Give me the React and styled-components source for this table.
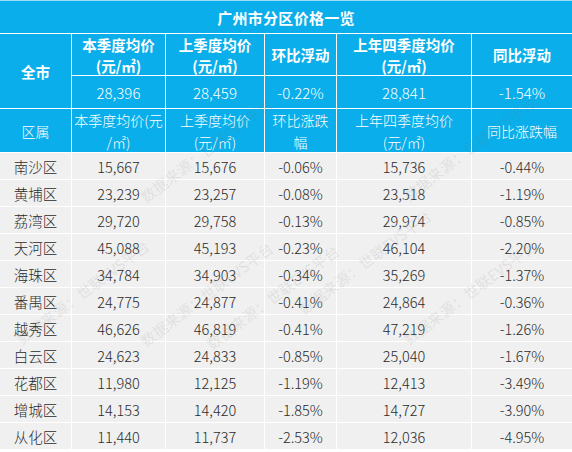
import React from "react";
import styled, { createGlobalStyle } from "styled-components";

const blue = "#0aaeea";
const cjk = `"Noto Sans CJK SC", "Noto Sans", sans-serif`;

const GlobalStyle = createGlobalStyle`
  html, body {
    margin: 0;
    padding: 0;
    background: #ffffff;
  }
  body {
    font-family: ${cjk};
  }
`;

const Wrap = styled.div`
  position: relative;
  width: 572px;
  height: 452px;
  overflow: hidden;
  background: #ffffff;
`;

const Grid = styled.div`
  display: grid;
  grid-template-columns: 71px 93px 98px 71px 134px 1fr;
  grid-template-rows: 32px 41px 32px 43px repeat(11, 26px);
  gap: 1px;
  border-top: 1px solid #9fdcf5;
  background: #ffffff;
`;

const Cell = styled.div`
  display: flex;
  align-items: center;
  justify-content: center;
  text-align: center;
  white-space: nowrap;
  overflow: hidden;
`;

const Title = styled(Cell)`
  grid-column: 1 / -1;
  background: ${blue};
  color: #ffffff;
  font-size: 15px;
  font-weight: 700;
  letter-spacing: 0.3px;
`;

const HeadCell = styled(Cell)`
  grid-row: ${(p) => (p.$tall ? "span 2" : "auto")};
  background: ${blue};
  color: #ffffff;
  font-size: 14.5px;
  font-weight: 700;
  line-height: 21px;
`;

const HeadValue = styled(Cell)`
  background: ${blue};
  color: #ffffff;
  font-size: 15px;
  font-weight: 300;
`;

const SubHead = styled(Cell)`
  background: ${blue};
  color: #ffffff;
  font-size: 14px;
  font-weight: 300;
  line-height: 22px;
`;

const DataCell = styled(Cell)`
  background: #f0f0f0;
  color: #2b2b2b;
  font-size: 14.5px;
  font-weight: 300;
`;

const Mark = styled.span`
  position: absolute;
  left: ${(p) => p.$x}px;
  top: ${(p) => p.$y}px;
  transform: rotate(-37deg);
  transform-origin: left center;
  font-family: ${cjk};
  font-size: 15px;
  color: rgba(120, 120, 120, 0.15);
  white-space: nowrap;
  pointer-events: none;
`;

const rows = [
  ["南沙区", "15,667", "15,676", "-0.06%", "15,736", "-0.44%"],
  ["黄埔区", "23,239", "23,257", "-0.08%", "23,518", "-1.19%"],
  ["荔湾区", "29,720", "29,758", "-0.13%", "29,974", "-0.85%"],
  ["天河区", "45,088", "45,193", "-0.23%", "46,104", "-2.20%"],
  ["海珠区", "34,784", "34,903", "-0.34%", "35,269", "-1.37%"],
  ["番禺区", "24,775", "24,877", "-0.41%", "24,864", "-0.36%"],
  ["越秀区", "46,626", "46,819", "-0.41%", "47,219", "-1.26%"],
  ["白云区", "24,623", "24,833", "-0.85%", "25,040", "-1.67%"],
  ["花都区", "11,980", "12,125", "-1.19%", "12,413", "-3.49%"],
  ["增城区", "14,153", "14,420", "-1.85%", "14,727", "-3.90%"],
  ["从化区", "11,440", "11,737", "-2.53%", "12,036", "-4.95%"],
];

const marks = [
  [18, 330],
  [142, 188],
  [208, 335],
  [405, 186],
  [142, 332],
  [405, 330],
  [300, 300],
];

export default function App() {
  return (
    <Wrap>
      <GlobalStyle />
      <Grid>
        <Title>广州市分区价格一览</Title>

        <HeadCell $tall>全市</HeadCell>
        <HeadCell>本季度均价<br />(元/㎡)</HeadCell>
        <HeadCell>上季度均价<br />(元/㎡)</HeadCell>
        <HeadCell>环比浮动</HeadCell>
        <HeadCell>上年四季度均价<br />(元/㎡)</HeadCell>
        <HeadCell>同比浮动</HeadCell>

        <HeadValue>28,396</HeadValue>
        <HeadValue>28,459</HeadValue>
        <HeadValue>-0.22%</HeadValue>
        <HeadValue>28,841</HeadValue>
        <HeadValue>-1.54%</HeadValue>

        <SubHead>区属</SubHead>
        <SubHead>本季度均价(元<br />/㎡)</SubHead>
        <SubHead>上季度均价<br />(元/㎡)</SubHead>
        <SubHead>环比涨跌<br />幅</SubHead>
        <SubHead>上年四季度均价<br />(元/㎡)</SubHead>
        <SubHead>同比涨跌幅</SubHead>

        {rows.map((r) =>
          r.map((v, i) => <DataCell key={r[0] + i}>{v}</DataCell>)
        )}
      </Grid>
      {marks.map(([x, y]) => (
        <Mark key={x + "-" + y} $x={x} $y={y}>
          数据来源：世联EVS平台
        </Mark>
      ))}
    </Wrap>
  );
}
